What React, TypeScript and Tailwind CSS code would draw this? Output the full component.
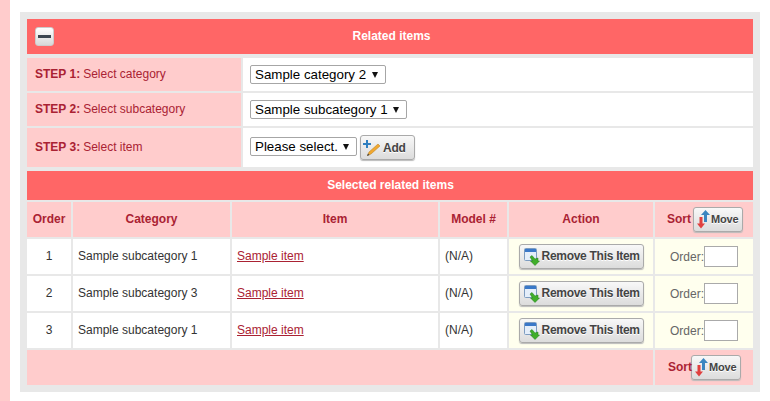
const rows = [
  { order: 1, category: 'Sample subcategory 1' },
  { order: 2, category: 'Sample subcategory 3' },
  { order: 3, category: 'Sample subcategory 1' },
];

const steps = [
  { step: 'STEP 1:', label: 'Select category', value: 'Sample category 2', width: 'w-[136px]' },
  { step: 'STEP 2:', label: 'Select subcategory', value: 'Sample subcategory 1', width: 'w-[157px]' },
];

const columns = 'grid grid-cols-[44px_157px_206px_67px_144px_98px] gap-x-[2px]';
const button =
  'flex items-center rounded-[3px] border border-[#aaaaaa] bg-gradient-to-b from-[#f8f8f8] to-[#dcdcdc] font-bold text-[#444444] shadow-[0_1px_1px_#bbbbbb] [text-shadow:0_1px_0_#ffffff]';

function FakeSelect({ value, width, className = '' }: { value: string; width: string; className?: string }) {
  return (
    <div className={`flex h-[19px] ${width} ${className} items-center rounded-[2px] border border-[#a6a6a6] bg-white pl-[4px] text-[13.33px] text-black`}>
      <span className="whitespace-nowrap">{value}</span>
      <svg className="ml-auto mr-[7px]" width="6" height="6" viewBox="0 0 6 6">
        <path d="M0 0h6L3 6z" fill="#111" />
      </svg>
    </div>
  );
}

function MoveButton() {
  return (
    <div className={`${button} h-[25px] w-[50px] pl-[3px] text-[11px] tracking-[-0.2px]`}>
      <svg width="14" height="19" viewBox="0 0 14 19">
        <path d="M8.500 0L13 5h-3v7H7V5H4z" fill="#3b86c0" />
        <path d="M4 18.500L0 13.500h2.500V7h3v6.500H8z" fill="#e0403f" />
      </svg>
      <span>Move</span>
    </div>
  );
}

function RemoveIcon() {
  return (
    <svg width="16" height="18" viewBox="0 0 16 18">
      <rect x="0.5" y="0.5" width="12" height="12" rx="1" fill="#e4eefa" stroke="#7d9cc0" />
      <rect x="1" y="1" width="11" height="3" fill="#3a78c8" />
      <path d="M6 9l2-1.500 3 3.500 3-1v3l1.500 0-4.500 4.500-4.500-4.500 2 0z" fill="#3fae2a" stroke="#1f7d18" strokeWidth="0.5" />
    </svg>
  );
}

function AddIcon() {
  return (
    <svg width="18" height="18" viewBox="0 0 18 18">
      <path d="M3 1h2v3h3v2H5v3H3V6H0V4h3z" fill="#2f7fc0" />
      <path d="M15 5l2 2-9 8-3.500 1.500L6 13z" fill="#f0a830" stroke="#b87a18" strokeWidth="0.5" />
      <path d="M5 14.500l-1 2.500 2.500-1z" fill="#444" />
    </svg>
  );
}

export default function App() {
  return (
    <div className="h-[401px] w-[780px] overflow-hidden bg-white px-[10px] font-['Liberation_Sans',Arial,sans-serif] text-[12px] text-[#333333] bg-[linear-gradient(to_right,#ffcccc_10px,transparent_10px,transparent_770px,#ffcccc_770px)]">
      <div className="px-[10px] pt-[12px]">
        <div className="flex h-[380px] w-[740px] flex-col bg-[#e8e8e8] p-[7px]">
          <div className="relative flex h-[35px] items-center justify-center bg-[#ff6666] pb-[2px] pl-[3px] font-bold text-white">
            <div className="absolute left-[8px] top-[8px] flex h-[19px] w-[19px] items-center justify-center rounded-[3px] border border-[#cccccc] bg-gradient-to-b from-[#ffffff] to-[#d8d8d8]">
              <div className="h-[3px] w-[13px] bg-[#3c4650]" />
            </div>
            Related items
          </div>

          <div className="mt-[4px] flex flex-col gap-y-[2px]">
            {steps.map((s) => (
              <div key={s.step} className="grid h-[33px] grid-cols-[214px_510px] gap-x-[2px]">
                <div className="flex items-center bg-[#ffcccc] pb-[2px] pl-[8px] text-[#aa2233]">
                  <b className="mr-[3px]">{s.step}</b> {s.label}
                </div>
                <div className="flex items-center bg-white pl-[7px]">
                  <FakeSelect value={s.value} width={s.width} />
                </div>
              </div>
            ))}
            <div className="grid h-[39px] grid-cols-[214px_510px] gap-x-[2px]">
              <div className="flex items-center bg-[#ffcccc] pb-[2px] pl-[8px] text-[#aa2233]">
                <b className="mr-[3px]">STEP 3:</b> Select item
              </div>
              <div className="flex items-center bg-white pl-[7px]">
                <FakeSelect value="Please select." width="w-[107px]" className="mb-[2px]" />
                <div className={`${button} ml-[3px] h-[25px] w-[55px] pl-[2px] text-[12px] tracking-[-0.2px]`}>
                  <AddIcon />
                  <span className="ml-[2px]">Add</span>
                </div>
              </div>
            </div>
          </div>

          <div className="mt-[4px] flex h-[29px] items-center justify-center bg-[#ff6666] pb-[2px] pl-[1px] font-bold text-white">
            Selected related items
          </div>

          <div className={`${columns} mt-[2px] h-[35px] font-bold text-[#aa2233]`}>
            <div className="flex items-center justify-center bg-[#ffcccc] pb-[2px]">Order</div>
            <div className="flex items-center justify-center bg-[#ffcccc] pb-[2px]">Category</div>
            <div className="flex items-center justify-center bg-[#ffcccc] pb-[2px]">Item</div>
            <div className="flex items-center justify-center bg-[#ffcccc] pb-[2px]">Model #</div>
            <div className="flex items-center justify-center bg-[#ffcccc] pb-[2px]">Action</div>
            <div className="flex items-center bg-[#ffcccc] pl-[12px]">
              <span className="mr-[2px] -translate-y-px">Sort</span>
              <MoveButton />
            </div>
          </div>

          {rows.map((row) => (
            <div key={row.order} className={`${columns} mt-[2px] h-[35px]`}>
              <div className="flex items-center justify-center bg-white pb-[2px]">{row.order}</div>
              <div className="flex items-center bg-white pb-[2px] pl-[5px]">{row.category}</div>
              <div className="flex items-center bg-white pb-[2px] pl-[5px]">
                <a className="text-[#aa2233] underline">Sample item</a>
              </div>
              <div className="flex items-center bg-white pb-[2px] pl-[5px]">(N/A)</div>
              <div className="flex items-center justify-center bg-[#ffffee]">
                <div className={`${button} h-[25px] w-[125px] pl-[4px] text-[12px] tracking-[-0.28px]`}>
                  <RemoveIcon />
                  <span className="ml-[2px] -translate-y-px whitespace-nowrap">Remove This Item</span>
                </div>
              </div>
              <div className="flex items-center bg-[#ffffee] pl-[15px] text-[#666666]">
                Order:
                <div className="h-[21px] w-[34px] border border-[#aaaaaa] bg-white" />
              </div>
            </div>
          ))}

          <div className="mt-[2px] grid h-[35px] grid-cols-[626px_98px] gap-x-[2px]">
            <div className="bg-[#ffcccc]" />
            <div className="flex items-center bg-[#ffcccc] pl-[13px] font-bold text-[#aa2233]">
              <span className="-mr-[1px] -translate-y-px">Sort</span>
              <MoveButton />
            </div>
          </div>
        </div>
      </div>
    </div>
  );
}
